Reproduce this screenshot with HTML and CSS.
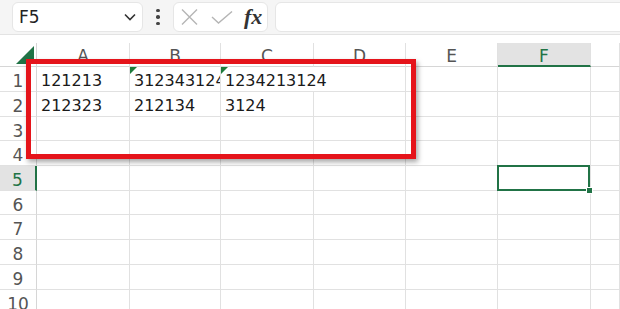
FILE: index.html
```html
<!DOCTYPE html>
<html lang="en">
<head>
    <meta charset="UTF-8">
    <title>Sheet</title>
    <link rel="stylesheet" href="styles.css">
</head>
<body>
    <div class="toolbar">
        <div class="namebox">
            <span>F5</span>
            <svg width="12" height="8" viewBox="0 0 12 8"><path d="M1 1.5 L6 6.5 L11 1.5" fill="none" stroke="#333" stroke-width="1.6"/></svg>
        </div>
        <div class="dots"><i></i><i></i><i></i></div>
        <div class="fxbox">
            <svg width="17" height="16" viewBox="0 0 17 16"><path d="M1 0.5 L16 15.5 M16 0.5 L1 15.5" stroke="#b5b5b5" stroke-width="1.4"/></svg>
            <svg class="check" width="22" height="13" viewBox="0 0 22 13"><path d="M1 6 L7.5 12 L21 0.5" fill="none" stroke="#b5b5b5" stroke-width="1.4"/></svg>
            <span class="fx">fx</span>
        </div>
        <div class="formula"></div>
    </div>

    <div class="sheet">
        <div class="corner"></div>
        <div class="hd">A</div><div class="hd">B</div><div class="hd">C</div><div class="hd">D</div><div class="hd">E</div><div class="hd on">F</div><div class="hd"></div>

        <div class="rh">1</div>
        <div class="c">121213</div><div class="c flag">3123431243</div><div class="c flag wide">1234213124</div><div class="c"></div><div class="c"></div><div class="c"></div>

        <div class="rh">2</div>
        <div class="c">212323</div><div class="c">212134</div><div class="c">3124</div><div class="c"></div><div class="c"></div><div class="c"></div><div class="c"></div>

        <div class="rh">3</div>
        <div class="c"></div><div class="c"></div><div class="c"></div><div class="c"></div><div class="c"></div><div class="c"></div><div class="c"></div>

        <div class="rh">4</div>
        <div class="c"></div><div class="c"></div><div class="c"></div><div class="c"></div><div class="c"></div><div class="c"></div><div class="c"></div>

        <div class="rh on">5</div>
        <div class="c"></div><div class="c"></div><div class="c"></div><div class="c"></div><div class="c"></div><div class="c sel"><span class="handle"></span></div><div class="c"></div>

        <div class="rh">6</div>
        <div class="c"></div><div class="c"></div><div class="c"></div><div class="c"></div><div class="c"></div><div class="c"></div><div class="c"></div>

        <div class="rh">7</div>
        <div class="c"></div><div class="c"></div><div class="c"></div><div class="c"></div><div class="c"></div><div class="c"></div><div class="c"></div>

        <div class="rh">8</div>
        <div class="c"></div><div class="c"></div><div class="c"></div><div class="c"></div><div class="c"></div><div class="c"></div><div class="c"></div>

        <div class="rh">9</div>
        <div class="c"></div><div class="c"></div><div class="c"></div><div class="c"></div><div class="c"></div><div class="c"></div><div class="c"></div>

        <div class="rh">10</div>
        <div class="c"></div><div class="c"></div><div class="c"></div><div class="c"></div><div class="c"></div><div class="c"></div><div class="c"></div>

        <div class="callout"></div>
    </div>
</body>
</html>
```

FILE: styles.css
```css
*{
    box-sizing: border-box;
}
html, body{
    margin: 0;
    height: 100%;
    overflow: hidden;
    background-color: white;
    font-family: 'DejaVu Sans', sans-serif;
    font-size: 16px;
}
.toolbar{
    display: flex;
    align-items: center;
    height: 35px;
    padding-left: 12px;
    background-color: #f5f5f5;
    border-bottom: 1px solid #e3e3e3;
}
.namebox{
    display: flex;
    justify-content: space-between;
    align-items: center;
    width: 131px;
    height: 30px;
    padding: 0 6px;
    background-color: white;
    border: 1px solid #e6e6e6;
    border-radius: 6px;
    color: #222;
    font-size: 17px;
}
.dots{
    display: flex;
    flex-direction: column;
    gap: 3px;
    margin-left: 13px;
    width: 4px;
}
.dots i{
    display: block;
    width: 3.5px;
    height: 3.5px;
    border-radius: 50%;
    background-color: #444;
}
.fxbox{
    display: flex;
    align-items: center;
    margin-left: 13px;
    width: 95px;
    height: 30px;
    padding-left: 7px;
    background-color: white;
    border: 1px solid #e6e6e6;
    border-radius: 6px;
}
.check{
    margin-left: 13px;
}
.fx{
    margin-left: 11px;
    font-family: 'Liberation Serif', serif;
    font-style: italic;
    font-weight: bold;
    font-size: 22px;
    color: #333;
    line-height: 20px;
}
.formula{
    flex: 1;
    margin-left: 7px;
    margin-right: -10px;
    height: 30px;
    background-color: white;
    border: 1px solid #e6e6e6;
    border-radius: 6px;
}
.sheet{
    position: relative;
    display: grid;
    grid-template-columns: 37px 93px 91px 93px 92px 92px 93px 1fr;
    grid-template-rows: 24px 25px 25px 24px 25px 25px 24px 25px 25px 25px 25px;
    margin-top: 8px;
}
.corner{
    position: relative;
    border-right: 1px solid #d6d6d6;
    border-bottom: 1px solid #d6d6d6;
}
.corner::after{
    content: "";
    position: absolute;
    right: 2px;
    bottom: 2px;
    border-left: 18px solid transparent;
    border-bottom: 18px solid #217346;
}
.hd{
    text-align: center;
    padding-top: 3px;
    line-height: 20px;
    font-size: 17px;
    color: #555;
    border-right: 1px solid #e1e1e1;
    border-bottom: 1px solid #d6d6d6;
}
.hd.on{
    background-color: #e3e3e3;
    color: #217346;
    border-bottom: 2px solid #217346;
}
.rh{
    text-align: center;
    padding-top: 4px;
    line-height: 20px;
    font-size: 17px;
    color: #555;
    border-right: 1px solid #d6d6d6;
    border-bottom: 1px solid #e1e1e1;
}
.rh.on{
    background-color: #e3e3e3;
    color: #217346;
    border-right: 2px solid #217346;
}
.c{
    position: relative;
    padding: 4px 0 0 4px;
    line-height: 20px;
    white-space: nowrap;
    overflow: hidden;
    color: #1a1a1a;
    border-right: 1px solid #e1e1e1;
    border-bottom: 1px solid #e1e1e1;
}
.c.wide{
    grid-column: span 2;
    overflow: visible;
}
.flag::before{
    content: "";
    position: absolute;
    left: 0;
    top: 0;
    border-top: 7px solid #1e7b3a;
    border-right: 7px solid transparent;
}
.sel{
    overflow: visible;
}
.sel::after{
    content: "";
    position: absolute;
    left: -1px;
    top: -1px;
    right: 0;
    bottom: -1px;
    border: 2px solid #217346;
}
.handle{
    position: absolute;
    right: -3px;
    bottom: -4px;
    width: 7px;
    height: 7px;
    background-color: #217346;
    border: 1px solid white;
    z-index: 2;
}
.callout{
    position: absolute;
    left: 26px;
    top: 16px;
    width: 390px;
    height: 100px;
    border: 5px solid #e5141b;
    box-shadow: 2px 3px 5px rgba(0, 0, 0, 0.35);
    z-index: 5;
}
```
